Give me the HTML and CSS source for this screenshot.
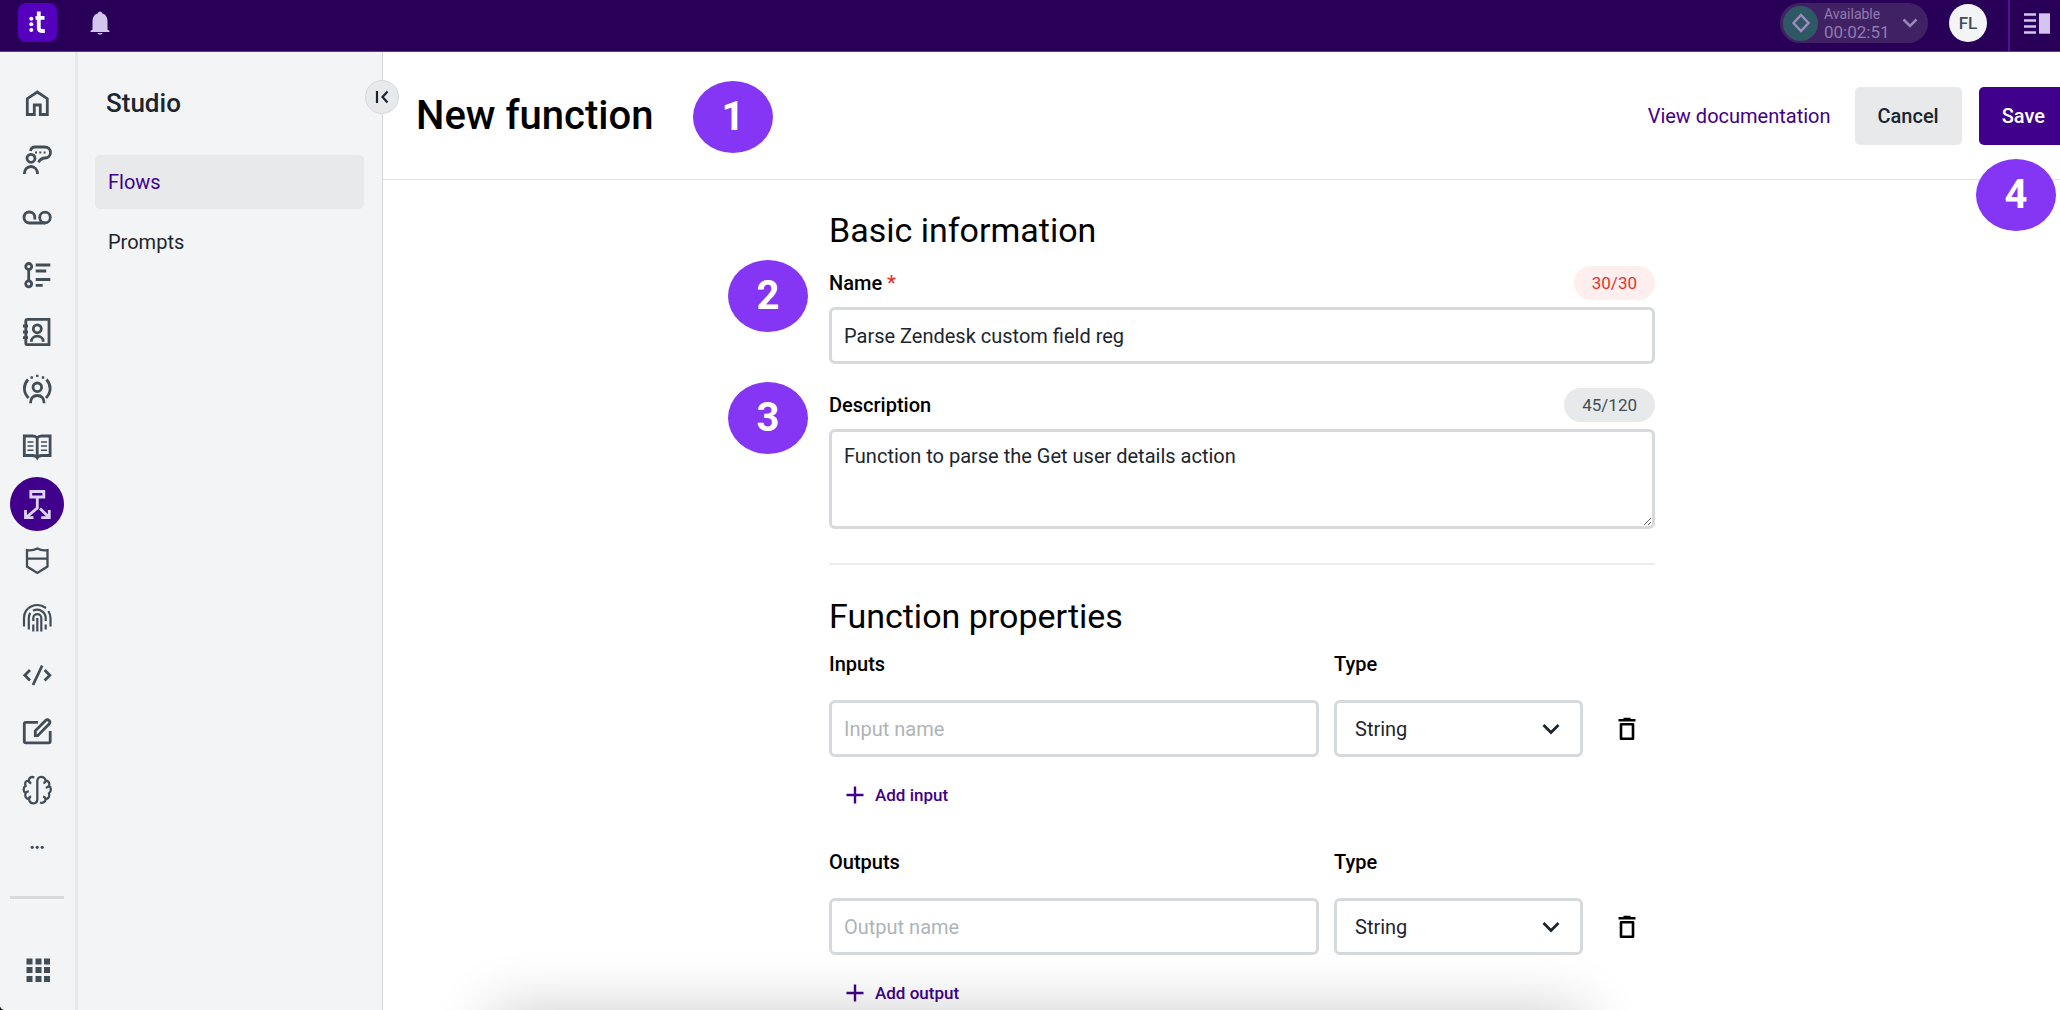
FILE: index.html
```html
<!DOCTYPE html>
<html lang="en">
<head>
<meta charset="utf-8">
<meta name="viewport" content="width=device-width, initial-scale=1">
<title>New function</title>
<link rel="stylesheet" href="styles.css">
</head>
<body>
<div class="app">
  <header class="topbar">
    <a class="logo" href="#" aria-label="Home">
      <svg width="39" height="39" viewBox="0 0 39 39"><g fill="#fff"><circle cx="13.300" cy="15.700" r="2"/><circle cx="13.300" cy="21.300" r="2"/><circle cx="13.300" cy="27" r="2"/></g><path d="M20.800 8.500V25q0 3 3 3h3M17.500 14.800h9" fill="none" stroke="#fff" stroke-width="3.800"/></svg>
    </a>
    <button class="icon-button bell" type="button" aria-label="Notifications">
      <svg width="20" height="24" viewBox="0 0 20 24"><path d="M10 0.500c1.200 0 1.900 0.800 2 1.800 3.500 1 5.500 3.800 5.500 7.500v8.700l2 1.500v1H0.500v-1l2-1.500V9.800c0-3.700 2-6.500 5.500-7.500 0.100-1 0.800-1.800 2-1.800zM7.500 22h5c-0.500 2-4.500 2-5 0z" fill="#d3c5ee"/></svg>
    </button>
    <button class="status" type="button">
      <span class="status-dot"><svg width="20" height="20" viewBox="0 0 20 20"><path d="M10 2l7.500 8-7.500 8-7.500-8z" fill="none" stroke="#a18bc0" stroke-width="2.400"/></svg></span>
      <span class="status-text"><span class="status-name">Available</span><span class="status-time">00:02:51</span></span>
      <svg width="16" height="10" viewBox="0 0 16 10"><path d="M1.500 1.500l6.500 6.500 6.500-6.500" fill="none" stroke="#9b86b8" stroke-width="2.500"/></svg>
    </button>
    <button class="avatar" type="button">FL</button>
    <div class="panel-toggle">
      <button class="icon-button" type="button" aria-label="Toggle panel">
        <svg width="26" height="21" viewBox="0 0 26 21"><path d="M0 1.500h12M0 7.500h12M0 13.500h12M0 19.500h12" stroke="#d3c5ee" stroke-width="2.400"/><path d="M15 0.300h11v20.400H15z" fill="#d3c5ee"/></svg>
      </button>
    </div>
  </header>

  <div class="body">
    <nav class="rail" aria-label="Main">
      <div class="rail-list">
        <a class="rail-item" href="#" aria-label="Home"><svg viewBox="0 0 30 30"><path d="M5.300 26.500V10.700L15.300 4l10 6.700v15.800h-7V17h-6v9.500z"/></svg></a>
        <a class="rail-item" href="#" aria-label="Conversations"><svg viewBox="0 0 30 30"><circle cx="9" cy="13.300" r="4"/><path d="M2.300 29c0-4.500 3-7.500 6.700-7.500s6.500 3 6.500 7.500M8.500 6c0.500-2.800 2.200-4 4.500-4h9.500c3.700 0 6 2.200 6 5.500 0 3.400-2.500 5.500-5.500 5.500-3.500 0-5 1.500-6.500 4.300"/><path d="M13 7.500h2M17.300 7.500h2M21.600 7.500h2" stroke-width="2"/></svg></a>
        <a class="rail-item" href="#" aria-label="Voicemail"><svg viewBox="0 0 30 30"><path d="M12.800 17.500v-2c0-3.300-2.300-5.500-5.500-5.500S2 12.300 2 15.500 4.500 21 7.500 21h15.800"/><circle cx="23" cy="15.500" r="5.300"/></svg></a>
        <a class="rail-item" href="#" aria-label="Activities"><svg viewBox="0 0 30 30"><circle cx="6.700" cy="6.500" r="3"/><circle cx="6.700" cy="23.800" r="3"/><path d="M6.700 9.500v11.300M13.700 5h14.600M13.700 11h10.500M13.700 19.500h14.600M13.700 25.300h7"/></svg></a>
        <a class="rail-item" href="#" aria-label="Contacts"><svg viewBox="0 0 30 30"><path d="M5.500 2.300h21.500v25.400H5.500q-1.700 0-1.700-1.700V4q0-1.700 1.700-1.700zM1 9h5M1 15h5M1 20.700h5"/><circle cx="15.300" cy="11.800" r="4"/><path d="M9.300 24.700c0-3.300 2.700-5.500 6-5.500s6 2.200 6 5.500"/></svg></a>
        <a class="rail-item" href="#" aria-label="Live"><svg viewBox="0 0 30 30"><circle cx="15.300" cy="13.300" r="4.300"/><path d="M8.500 29.300c0-5 2.700-7.800 6.800-7.800s6.800 2.800 6.800 7.800M6 5.500c-4.500 5-5.300 12.500 0.500 18.500M24.500 5.500c4.500 5 5.300 12.500-0.500 18.500"/><path d="M8.500 3.500h2.400M14.100 1.800h2.400M19.800 3.500h2.400" stroke-width="2.300"/></svg></a>
        <a class="rail-item" href="#" aria-label="Knowledge"><svg viewBox="0 0 30 30"><path d="M2.300 5h8.500q3 0 4.400 2 1.400-2 4.400-2h8.500v19.500h-8.500q-3 0-4.400 2.300-1.400-2.300-4.400-2.300H2.300zM15.200 7v19"/><path d="M5.500 11h6M5.500 15h6M5.500 19.300h6M19 11h6M19 15h6M19 19.300h6" stroke-width="1.500"/></svg></a>
        <a class="rail-item rail-item-active" href="#" aria-label="Studio" aria-current="page"><svg viewBox="0 0 30 30"><path d="M8.800 2.500h13v5.500h-13zM15.300 8v11L4 28.500M3.500 21v7.700h8M18 19.500l9.300 9M27.300 21v7.700h-8"/></svg></a>
        <a class="rail-item" href="#" aria-label="Security"><svg viewBox="0 0 30 30"><path d="M5 4.200q5.500 1 10.300-1.700Q20 5.200 25.500 4.200V20.500L15.300 27 5 20.500zM5 12.600h20.500" stroke-width="2.300"/></svg></a>
        <a class="rail-item" href="#" aria-label="Identity"><svg viewBox="0 0 30 30"><path d="M2 23.500V15C2 3.500 15-1.500 24 5M26.300 8q2.200 3.300 2.200 7v8.500M6.800 26.500V15q0-3 1.500-5M11 7.800c6-3 12.700 1 12.700 7.500V18M23.700 21.500v5M11.300 18v-3c0-5.300 8-5.300 8 0v13.500M11.300 21.500v7M15.300 15v13.500" stroke-width="2.200"/></svg></a>
        <a class="rail-item" href="#" aria-label="Developer"><svg viewBox="0 0 30 30"><path d="M8 10l-5.200 5.300L8 20.600M22.600 10l5.200 5.300-5.200 5.300M20.200 5.500l-9.200 19.500"/></svg></a>
        <a class="rail-item" href="#" aria-label="Builder"><svg viewBox="0 0 30 30"><path d="M16 5.300H3.800Q2.300 5.300 2.300 6.800v17.500q0 1.500 1.500 1.500h22.900q1.500 0 1.500-1.500V14M13.300 18.700v-4.900L23.600 3.500q1.700-1.700 3.500 0 1.700 1.700 0 3.400L15.700 18.700z"/></svg></a>
        <a class="rail-item" href="#" aria-label="AI"><svg viewBox="0 0 30 30"><path d="M12.300 2.500C9.500 1.200 7 2.500 6.800 5.300 3.500 5.500 2.300 8.500 3.600 10.800 1 12.300 1 16.500 3.600 18.200 2.300 21 4 23.700 7 24.200 7.500 27 9.500 28.300 11.500 28.300c2.500 0 3.800-1.500 3.800-4V6.300c0-2.500 1.300-4.500 3.800-4.500 2 0 4 1.300 4.500 3.600 3 0.400 4.500 3.200 3.300 5.400 2.600 1.700 2.600 5.900 0 7.600 1.200 2.700-0.300 5.400-3.300 5.900-0.300 2.700-2.800 4.200-5.600 3.200M6.800 5.300q0.200 2.500 2.500 2.700M3.600 18.200q1.200-1.800 3.200-1.800M7 24.200q0-2.300 2.200-2.500M23.600 5.400q0 2.200-2.200 2.600M26.900 10.800q-1.200 1.800-3.200 1.800M23.600 24.300q-0.200-2.200-2.500-2.600" stroke-width="2.300"/></svg></a>
        <button class="rail-item" type="button" aria-label="More"><svg viewBox="0 0 30 30"><g class="solid"><circle cx="10.200" cy="15.300" r="1.600"/><circle cx="15.200" cy="15.300" r="1.600"/><circle cx="20.200" cy="15.300" r="1.600"/></g></svg></button>
      </div>
      <div class="rail-footer">
        <button class="icon-button" type="button" aria-label="Apps">
          <svg width="25" height="25" viewBox="0 0 25 25"><path d="M0.500 0.500h6v6h-6zM9.500 0.500h6v6h-6zM18 0.500h6v6h-6zM0.500 9h6v6h-6zM9.500 9h6v6h-6zM18 9h6v6h-6zM0.500 18h6v6h-6zM9.500 18h6v6h-6zM18 18h6v6h-6z" fill="#414d57"/></svg>
        </button>
      </div>
    </nav>

    <nav class="subnav" aria-label="Studio">
      <h2 class="subnav-title">Studio</h2>
      <a class="subnav-link subnav-link-active" href="#" aria-current="page">Flows</a>
      <a class="subnav-link" href="#">Prompts</a>
      <button class="collapse" type="button" aria-label="Collapse menu">
        <svg width="14" height="14" viewBox="0 0 14 14"><path d="M2 1v12M12.500 1.500L7.500 7l5 5.500" fill="none" stroke="#1c252e" stroke-width="2.200"/></svg>
      </button>
    </nav>

    <div class="viewport">
      <main class="main">
        <header class="page-header">
          <h1 class="page-title">New function <span class="marker marker-title">1</span></h1>
          <a class="doc-link" href="#">View documentation</a>
          <button class="button" type="button">Cancel</button>
          <button class="button button-primary" type="submit" form="function-form">Save</button>
          <span class="marker marker-save">4</span>
        </header>

        <form class="form" id="function-form">
          <section class="section">
            <h2 class="section-title">Basic information</h2>
            <div class="field">
              <div class="field-head">
                <label class="label" for="name">Name <span class="required">*</span></label>
                <span class="counter counter-full">30/30</span>
              </div>
              <input class="control" id="name" type="text" maxlength="30" value="Parse Zendesk custom field reg">
              <span class="marker marker-field">2</span>
            </div>
            <div class="field">
              <div class="field-head">
                <label class="label" for="description">Description</label>
                <span class="counter">45/120</span>
              </div>
              <textarea class="control control-area" id="description" maxlength="120">Function to parse the Get user details action</textarea>
              <span class="marker marker-field">3</span>
            </div>
          </section>

          <section class="section section-ruled">
            <h2 class="section-title">Function properties</h2>
            <div class="group">
              <div class="property">
                <label class="label" for="input-name">Inputs</label>
                <label class="label" for="input-type">Type</label>
                <span></span>
                <input class="control" id="input-name" type="text" placeholder="Input name">
                <div class="select">
                  <select class="control" id="input-type"><option>String</option></select>
                  <svg class="chevron" viewBox="0 0 18 12"><path d="M1.500 2l7.500 7.500L16.500 2"/></svg>
                </div>
                <button class="icon-button" type="button" aria-label="Delete input">
                  <svg width="18" height="24" viewBox="0 0 18 24"><path d="M0.500 3.300h17M5.500 2h7M3 7.200v14.500h12V7.200z" fill="none" stroke="#000" stroke-width="2.600" stroke-linejoin="round"/></svg>
                </button>
              </div>
              <button class="add" type="button"><svg width="18" height="18" viewBox="0 0 18 18"><path d="M9 0.500v17M0.500 9h17"/></svg>Add input</button>
            </div>
            <div class="group">
              <div class="property">
                <label class="label" for="output-name">Outputs</label>
                <label class="label" for="output-type">Type</label>
                <span></span>
                <input class="control" id="output-name" type="text" placeholder="Output name">
                <div class="select">
                  <select class="control" id="output-type"><option>String</option></select>
                  <svg class="chevron" viewBox="0 0 18 12"><path d="M1.500 2l7.500 7.500L16.500 2"/></svg>
                </div>
                <button class="icon-button" type="button" aria-label="Delete output">
                  <svg width="18" height="24" viewBox="0 0 18 24"><path d="M0.500 3.300h17M5.500 2h7M3 7.200v14.500h12V7.200z" fill="none" stroke="#000" stroke-width="2.600" stroke-linejoin="round"/></svg>
                </button>
              </div>
              <button class="add" type="button"><svg width="18" height="18" viewBox="0 0 18 18"><path d="M9 0.500v17M0.500 9h17"/></svg>Add output</button>
            </div>
          </section>
        </form>
      </main>
      <div class="bottom-shade"></div>
    </div>
  </div>
</div>
</body>
</html>
```

FILE: styles.css
```css
*,
*::before,
*::after {
  box-sizing: border-box;
}

html {
  background: #101010;
}

body {
  margin: 0;
  font-family: Roboto, "Liberation Sans", sans-serif;
  font-size: 20px;
  line-height: 24px;
  color: #1c252e;
}

h1,
h2 {
  margin: 0;
}

a {
  color: inherit;
  text-decoration: none;
}

button,
input,
select,
textarea {
  margin: 0;
  font: inherit;
  color: inherit;
}

button {
  padding: 0;
  border: 0;
  background: none;
  cursor: pointer;
}

svg {
  display: block;
  flex: none;
}

.app {
  display: flex;
  flex-direction: column;
  height: 100vh;
  overflow: hidden;
  background: #fff;
  border-bottom-left-radius: 5px;
}

/* Top bar */
.topbar {
  display: flex;
  align-items: flex-start;
  flex: none;
  height: 52px;
  padding: 3px 0 0 18px;
  background: #290058;
  border-bottom: 1px solid #5c3e83;
}

.logo {
  border-radius: 8px;
  background: #5400bd;
}

.icon-button {
  display: flex;
  align-items: center;
  justify-content: center;
}

.bell {
  height: 40px;
  margin-left: 33px;
}

.status {
  display: flex;
  align-items: center;
  gap: 6px;
  width: 148px;
  height: 40px;
  margin-left: auto;
  padding: 0 10px 0 3px;
  border-radius: 20px;
  background: #402264;
  color: #917ab0;
  text-align: left;
}

.status-dot {
  display: flex;
  align-items: center;
  justify-content: center;
  width: 35px;
  height: 35px;
  border-radius: 50%;
  background: #2f5866;
}

.status-text {
  display: flex;
  flex-direction: column;
  flex: 1;
}

.status-name {
  font-size: 14px;
  line-height: 18px;
}

.status-time {
  font-size: 17px;
  line-height: 18px;
}

.avatar {
  width: 38px;
  height: 38px;
  margin: 1px 21px 0 21px;
  border-radius: 50%;
  background: #f3f4f6;
  color: #414d57;
  font-size: 17px;
  font-weight: 500;
}

.panel-toggle {
  display: flex;
  align-self: stretch;
  align-items: center;
  margin-top: -3px;
  padding: 0 10px 4px 14px;
  border-left: 2px solid #4f1494;
}

/* Page columns */
.body {
  display: flex;
  flex: 1;
  min-height: 0;
}

.rail {
  display: flex;
  flex-direction: column;
  align-items: center;
  flex: none;
  width: 78px;
  padding: 24px 2px 0 0;
  background: #f3f4f6;
  border-right: 3px solid #e8e9eb;
}

.rail-list {
  display: flex;
  flex: 1;
  flex-direction: column;
  justify-content: space-between;
  min-height: 0;
}

.rail-item {
  display: flex;
  align-items: center;
  justify-content: center;
  width: 54px;
  height: 54px;
  border-radius: 50%;
}

.rail-item svg {
  width: 30px;
  height: 30px;
  fill: none;
  stroke: #414d57;
  stroke-width: 2.8;
}

.rail-item svg .solid {
  fill: #414d57;
  stroke: none;
}

.rail-item-active {
  background: #40008b;
}

.rail-item-active svg {
  stroke: #dfd3f5;
}

.rail-footer {
  display: flex;
  justify-content: center;
  flex: none;
  width: 54px;
  height: 114px;
  margin-top: 22px;
  padding: 59px 0 27px 4px;
  border-top: 3px solid #d8dadc;
}

.subnav {
  position: relative;
  display: flex;
  flex-direction: column;
  gap: 6px;
  flex: none;
  width: 305px;
  padding: 35px 18px 0 17px;
  background: #f3f4f6;
  border-right: 1px solid #d5d9dc;
}

.subnav-title {
  margin: 0 0 30px 11px;
  font-size: 26px;
  line-height: 32px;
  font-weight: 500;
}

.subnav-link {
  padding: 15px 13px;
  border-radius: 5px;
}

.subnav-link-active {
  background: #e8e9eb;
  color: #40008b;
}

.collapse {
  position: absolute;
  top: 28px;
  right: -17px;
  z-index: 1;
  display: flex;
  align-items: center;
  justify-content: center;
  width: 34px;
  height: 34px;
  border: 1px solid #d5d9dc;
  border-radius: 50%;
  background: #e8e9eb;
}

/* Main area runs past the window's right edge */
.viewport {
  position: relative;
  flex: 1;
  min-width: 0;
  overflow: hidden;
}

.main {
  margin-right: -41px;
}

.page-header {
  position: relative;
  display: flex;
  align-items: center;
  height: 128px;
  padding: 0 33px;
  border-bottom: 1px solid #dfe4e6;
}

.page-title {
  position: relative;
  margin-right: auto;
  font-size: 40px;
  line-height: 48px;
  font-weight: 500;
  color: #000;
}

.doc-link {
  margin-right: 24px;
  color: #40008b;
}

.button {
  height: 58px;
  padding: 0 23px;
  border-radius: 5px;
  background: #e8e9eb;
  font-weight: 500;
}

.button-primary {
  margin-left: 17px;
  background: #40008b;
  color: #fff;
}

/* Numbered callouts laid over the page */
.marker {
  position: absolute;
  z-index: 2;
  width: 80px;
  height: 72px;
  border-radius: 50%;
  background: #8535f4;
  color: #fff;
  font-size: 40px;
  line-height: 72px;
  font-weight: 700;
  text-align: center;
}

.marker-title {
  top: -11px;
  left: 277px;
}

.marker-save {
  top: 107px;
  right: 45px;
}

.marker-field {
  top: -6px;
  left: -101px;
}

/* Form */
.form {
  max-width: 826px;
  margin: 0 auto;
  padding-top: 30px;
}

.section-title {
  margin-bottom: 16px;
  font-size: 34px;
  line-height: 40px;
  font-weight: 400;
  color: #000;
}

.section-ruled {
  margin-top: 34px;
  padding-top: 31px;
  border-top: 2px solid #ebecee;
}

.field {
  position: relative;
}

.field + .field {
  margin-top: 24px;
}

.field-head {
  display: flex;
  align-items: center;
  justify-content: space-between;
  margin-bottom: 7px;
}

.label {
  font-weight: 500;
  color: #000;
}

.required {
  color: #e2352b;
}

.counter {
  padding: 5px 18px;
  border-radius: 17px;
  background: #e8e9eb;
  color: #414d57;
  font-size: 17px;
}

.counter-full {
  background: #feeeee;
  color: #e2352b;
}

.control {
  display: block;
  width: 100%;
  height: 57px;
  padding: 0 12px;
  border: 3px solid #d6dadd;
  border-radius: 6px;
  outline: 0;
  background: #fff;
}

.control::placeholder {
  color: #aeb4b9;
  opacity: 1;
}

.control-area {
  height: 100px;
  padding: 12px;
  resize: vertical;
}

.property {
  display: grid;
  grid-template-columns: 1fr 249px 57px;
  column-gap: 15px;
  row-gap: 24px;
}

.group + .group {
  margin-top: 38px;
}

.select {
  position: relative;
}

.select .control {
  appearance: none;
  padding: 0 50px 0 18px;
}

.chevron {
  position: absolute;
  top: 23px;
  right: 23px;
  width: 18px;
  height: 12px;
  fill: none;
  stroke: #1c252e;
  stroke-width: 2.8;
  pointer-events: none;
}

.add {
  display: flex;
  align-items: center;
  gap: 11px;
  margin-top: 21px;
  padding: 5px 17px;
  color: #40008b;
  font-size: 17px;
  font-weight: 500;
}

.add svg {
  fill: none;
  stroke: currentColor;
  stroke-width: 2.4;
}

/* Soft shade rising from below the bottom edge */
.bottom-shade {
  position: absolute;
  top: 100%;
  left: 108px;
  right: 476px;
  height: 80px;
  box-shadow: 0 0 60px rgba(0, 0, 0, 0.2);
  pointer-events: none;
}
```
